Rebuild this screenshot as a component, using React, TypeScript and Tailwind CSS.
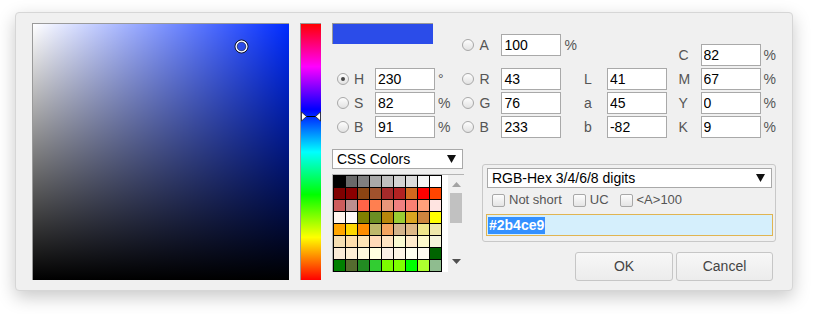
import React from "react";

const palette = [
  ["#000000", "#696969", "#808080", "#a9a9a9", "#c0c0c0", "#d3d3d3", "#dcdcdc", "#f5f5f5", "#ffffff"],
  ["#800000", "#8b0000", "#8b4513", "#a0522d", "#a52a2a", "#b22222", "#d2691e", "#ff0000", "#ff4500"],
  ["#cd5c5c", "#bc8f8f", "#ff6347", "#ff7f50", "#e9967a", "#f08080", "#fa8072", "#ffa07a", "#ffe4e1"],
  ["#fff5ee", "#fffafa", "#808000", "#6b8e23", "#b8860b", "#9acd32", "#daa520", "#cd853f", "#ffff00"],
  ["#ffa500", "#ffd700", "#ff8c00", "#bdb76b", "#f4a460", "#d2b48c", "#deb887", "#f0e68c", "#eee8aa"],
  ["#f5deb3", "#ffdead", "#ffe4b5", "#ffdab9", "#ffe4c4", "#fafad2", "#ffebcd", "#fffacd", "#f5f5dc"],
  ["#faebd7", "#ffefd5", "#fff8dc", "#ffffe0", "#faf0e6", "#fdf5e6", "#fffff0", "#fffaf0", "#006400"],
  ["#008000", "#556b2f", "#228b22", "#32cd32", "#7cfc00", "#7fff00", "#00ff00", "#adff2f", "#8fbc8f"],
];

function Radio({ checked = false }: { checked?: boolean }) {
  return (
    <span className="w-[12px] h-[12px] rounded-full border border-[#a8a8a8] bg-[linear-gradient(#fdfdfd,#e2e2e2)] flex items-center justify-center shrink-0">
      {checked && <span className="w-[4px] h-[4px] rounded-full bg-[#474747]" />}
    </span>
  );
}

function Checkbox({ label }: { label: string }) {
  return (
    <span className="flex items-center gap-[4px]">
      <span className="w-[13px] h-[13px] rounded-[2px] border border-[#a8a8a8] bg-[linear-gradient(#fdfdfd,#e4e4e4)]" />
      <span className="text-[13px] text-[#555]">{label}</span>
    </span>
  );
}

function Field({ value }: { value: string }) {
  return (
    <input
      readOnly
      value={value}
      className="w-[60px] h-[22px] border border-[#a9a9a9] bg-white pl-[2px] text-[14px] text-black outline-none"
    />
  );
}

function Select({ text, className }: { text: string; className: string }) {
  return (
    <div
      className={`h-[20px] border border-[#a9a9a9] bg-white flex items-center justify-between pl-[4px] pr-[6px] text-[14px] text-black ${className}`}
    >
      <span>{text}</span>
      <svg width="9" height="8" viewBox="0 0 9 8">
        <polygon points="0,0 9,0 4.5,8" fill="#111" />
      </svg>
    </div>
  );
}

function RadioRow({ label, value, unit, checked, labelW = "w-[22px]" }: { label: string; value: string; unit?: string; checked?: boolean; labelW?: string }) {
  return (
    <div className="h-[22px] flex items-center">
      <Radio checked={checked} />
      <span className={`${labelW} ml-[5px] text-[14px] text-[#555]`}>{label}</span>
      <Field value={value} />
      {unit && <span className="ml-[3px] text-[14px] text-[#555]">{unit}</span>}
    </div>
  );
}

function PlainRow({ label, value, unit, labelW }: { label: string; value: string; unit?: string; labelW: string }) {
  return (
    <div className="h-[22px] flex items-center">
      <span className={`${labelW} text-[14px] text-[#555]`}>{label}</span>
      <Field value={value} />
      {unit && <span className="ml-[3px] text-[14px] text-[#555]">{unit}</span>}
    </div>
  );
}

export default function App() {
  return (
    <div className="w-[814px] h-[314px] bg-white pt-[12px] pl-[15px] font-['Liberation_Sans',Arial,sans-serif]">
      <div className="w-[778px] h-[279px] border border-[#d6d6d6] rounded-[4px] bg-[#f0f0f0] shadow-[0_6px_18px_rgba(0,0,0,0.22)] pt-[10px] pl-[16px] flex">
        {/* saturation / brightness square */}
        <div className="w-[257px] h-[257px] border-t border-l border-[#9a9a9a] shrink-0">
          <div className="relative w-[256px] h-[256px] bg-[#002bff]">
            <div className="absolute inset-0 bg-[linear-gradient(to_right,#ffffff,rgba(255,255,255,0))]" />
            <div className="absolute inset-0 bg-[linear-gradient(to_top,#000000,rgba(0,0,0,0))]" />
            <svg className="absolute left-[201px] top-[15px]" width="15" height="15" viewBox="0 0 15 15">
              <circle cx="7.5" cy="7.5" r="6.5" fill="none" stroke="#111" strokeWidth="1" />
              <circle cx="7.5" cy="7.5" r="5.3" fill="none" stroke="#fff" strokeWidth="1.4" />
              <circle cx="7.5" cy="7.5" r="4.3" fill="none" stroke="#333" strokeWidth="0.6" />
            </svg>
          </div>
        </div>

        {/* hue bar */}
        <div className="ml-[11px] w-[21px] h-[257px] border-t border-l border-[#9a9a9a] shrink-0">
          <div className="relative w-[20px] h-[256px] bg-[linear-gradient(to_bottom,#ff0000,#ff00ff_16.67%,#0000ff_33.33%,#00ffff_50%,#00ff00_66.67%,#ffff00_83.33%,#ff0000)]">
            <svg className="absolute left-0 top-[87px]" width="20" height="11" viewBox="0 0 20 11">
              <line x1="5" y1="5.5" x2="15" y2="5.5" stroke="#000" strokeWidth="1" />
              <polygon points="0.5,1 5.5,5.5 0.5,10" fill="#fff" stroke="#222" strokeWidth="0.8" />
              <polygon points="19.5,1 14.5,5.5 19.5,10" fill="#fff" stroke="#222" strokeWidth="0.8" />
            </svg>
          </div>
        </div>

        {/* right panel */}
        <div className="ml-[11px] w-[444px] flex flex-col">
          <div className="flex">
            <div className="w-[131px] flex flex-col">
              <div className="w-[101px] h-[21px] border-t border-l border-[#9a9a9a] bg-[#2b4ce9]" />
              <div className="mt-[24px] pl-[5px] flex flex-col gap-[2px]">
                <RadioRow label="H" value="230" unit="°" checked labelW="w-[21px]" />
                <RadioRow label="S" value="82" unit="%" labelW="w-[21px]" />
                <RadioRow label="B" value="91" unit="%" labelW="w-[21px]" />
              </div>
            </div>
            <div className="w-[122px] flex flex-col">
              <div className="mt-[11px]">
                <RadioRow label="A" value="100" unit="%" />
              </div>
              <div className="mt-[12px] flex flex-col gap-[2px]">
                <RadioRow label="R" value="43" />
                <RadioRow label="G" value="76" />
                <RadioRow label="B" value="233" />
              </div>
            </div>
            <div className="w-[95px] mt-[45px] flex flex-col gap-[2px]">
              <PlainRow label="L" value="41" labelW="w-[23px]" />
              <PlainRow label="a" value="45" labelW="w-[23px]" />
              <PlainRow label="b" value="-82" labelW="w-[23px]" />
            </div>
            <div className="mt-[21px] flex flex-col gap-[2px]">
              <PlainRow label="C" value="82" unit="%" labelW="w-[22px]" />
              <PlainRow label="M" value="67" unit="%" labelW="w-[22px]" />
              <PlainRow label="Y" value="0" unit="%" labelW="w-[22px]" />
              <PlainRow label="K" value="9" unit="%" labelW="w-[22px]" />
            </div>
          </div>

          <div className="mt-[11px] flex">
            {/* css colors list */}
            <div className="w-[132px] flex flex-col">
              <Select text="CSS Colors" className="w-[131px]" />
              <div className="mt-[5px] w-[132px] h-[98px] border-t border-l border-[#b4b4b4] bg-white flex">
                <div className="grid grid-cols-[repeat(9,11px)] gap-[1px] p-[1px] bg-black h-[97px]">
                  {palette.flat().map((c, i) => (
                    <div key={i} className="w-[11px] h-[11px]" style={{ backgroundColor: c }} />
                  ))}
                </div>
                <div className="ml-auto w-[16px] bg-[#f0f0f0] flex flex-col items-center pt-[7px]">
                  <svg width="9" height="5" viewBox="0 0 9 5">
                    <polygon points="0,5 9,5 4.5,0" fill="#a3a3a3" />
                  </svg>
                  <div className="mt-[6px] w-[12px] h-[30px] bg-[#c1c1c1]" />
                  <svg className="mt-[36px]" width="9" height="5" viewBox="0 0 9 5">
                    <polygon points="0,0 9,0 4.5,5" fill="#505050" />
                  </svg>
                </div>
              </div>
            </div>

            {/* format group */}
            <div className="ml-[18px] w-[294px] flex flex-col">
              <div className="mt-[15px] h-[78px] border border-[#c8c8c8] rounded-[3px] pt-[3px] pl-[4px] flex flex-col">
                <Select text="RGB-Hex 3/4/6/8 digits" className="w-[285px]" />
                <div className="mt-[5px] ml-[5px] h-[14px] flex items-center gap-[11px]">
                  <Checkbox label="Not short" />
                  <Checkbox label="UC" />
                  <Checkbox label="<A>100" />
                </div>
                <div className="mt-[7px] -ml-[1px] w-[287px] h-[22px] border border-[#e0b451] bg-[#d5effc] flex items-center pl-[1px]">
                  <span className="bg-[#3390ff] text-white text-[14px] font-bold leading-[17px] px-[1px]">#2b4ce9</span>
                </div>
              </div>
              <div className="mt-[10px] pr-[3px] flex justify-end gap-[3px]">
                <button className="w-[98px] h-[29px] rounded-[3px] border border-[#c6c6c6] bg-[linear-gradient(#f7f7f7,#ececec)] text-[14px] text-[#444]">
                  OK
                </button>
                <button className="w-[97px] h-[29px] rounded-[3px] border border-[#c6c6c6] bg-[linear-gradient(#f7f7f7,#ececec)] text-[14px] text-[#444]">
                  Cancel
                </button>
              </div>
            </div>
          </div>
        </div>
      </div>
    </div>
  );
}
